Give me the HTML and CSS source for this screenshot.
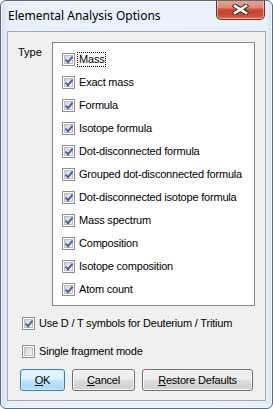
FILE: index.html
```html
<!DOCTYPE html>
<html lang="en">
<head>
    <meta charset="UTF-8">
    <meta name="viewport" content="width=device-width, initial-scale=1.0">
    <title>Elemental Analysis Options</title>
    <link rel="stylesheet" href="styles.css">
</head>
<body>
    <div class="window">
        <div class="titlebar">
            <span class="title">Elemental Analysis Options</span>
            <div class="close">
                <svg width="17" height="11" viewBox="0 0 17 11">
                    <path d="M3 2 L14 9 M14 2 L3 9" stroke="#4a2a26" stroke-width="4.6" stroke-linecap="square"/>
                    <path d="M3 2 L14 9 M14 2 L3 9" stroke="#ffffff" stroke-width="2.6" stroke-linecap="square"/>
                </svg>
            </div>
        </div>

        <div class="client">
            <div class="group">
                <div class="group-label">Type</div>
                <div class="listbox">
                    <label class="item"><span class="check on"></span><span class="text focus">Mass</span></label>
                    <label class="item"><span class="check on"></span><span class="text">Exact mass</span></label>
                    <label class="item"><span class="check on"></span><span class="text">Formula</span></label>
                    <label class="item"><span class="check on"></span><span class="text">Isotope formula</span></label>
                    <label class="item"><span class="check on"></span><span class="text">Dot-disconnected formula</span></label>
                    <label class="item"><span class="check on"></span><span class="text">Grouped dot-disconnected formula</span></label>
                    <label class="item"><span class="check on"></span><span class="text">Dot-disconnected isotope formula</span></label>
                    <label class="item"><span class="check on"></span><span class="text">Mass spectrum</span></label>
                    <label class="item"><span class="check on"></span><span class="text">Composition</span></label>
                    <label class="item"><span class="check on"></span><span class="text">Isotope composition</span></label>
                    <label class="item"><span class="check on"></span><span class="text">Atom count</span></label>
                </div>
            </div>

            <label class="option first"><span class="check on"></span><span class="text">Use D / T symbols for Deuterium / Tritium</span></label>
            <label class="option"><span class="check"></span><span class="text">Single fragment mode</span></label>

            <div class="buttons">
                <button class="btn default" style="width: 45px"><u>O</u>K</button>
                <button class="btn" style="width: 63px"><u>C</u>ancel</button>
                <button class="btn" style="width: 111px"><u>R</u>estore Defaults</button>
            </div>
        </div>
    </div>
</body>
</html>
```

FILE: styles.css
```css
body {
    margin: 0;
    background: #ffffff;
    font-family: "Liberation Sans", Arial, sans-serif;
    font-size: 11px;
    color: #000;
}
.window {
    width: 273px;
    height: 409px;
    box-sizing: border-box;
    border: 1px solid #5b6a7c;
    border-radius: 6px;
    background: linear-gradient(to right, #d5e2f1 0px, #e8f0fa 8px, #eaf2fb 50%, #e8f0fa 265px, #d5e2f1 100%);
    box-shadow: inset 0 0 0 1px #f4f8fd;
    display: flex;
    flex-direction: column;
    overflow: hidden;
}
.titlebar {
    height: 30px;
    display: flex;
    align-items: flex-start;
    padding-left: 7px;
}
.title {
    font-family: "Noto Sans", "Open Sans", sans-serif;
    font-size: 12px;
    line-height: 16px;
    margin-top: 7px;
    color: #000;
}
.close {
    margin-left: auto;
    margin-right: 7px;
    margin-top: -1px;
    width: 49px;
    height: 20px;
    box-sizing: border-box;
    border: 1px solid #7b2e22;
    border-top: none;
    border-radius: 0 0 5px 5px;
    background: linear-gradient(#e6a597 0%, #dc8a79 40%, #c7462e 52%, #c9482f 75%, #d9694f 100%);
    box-shadow: inset 0 0 0 1px rgba(255, 220, 210, 0.55);
    display: flex;
    justify-content: center;
    align-items: center;
}
.client {
    flex: 1;
    margin: 0 6px 7px 6px;
    border: 1px solid #9aa8b9;
    background: #f0f0f0;
    padding: 10px 10px 0 10px;
    display: flex;
    flex-direction: column;
}
.group {
    display: flex;
}
.group-label {
    width: 34px;
    margin-top: 4px;
    line-height: 13px;
}
.listbox {
    width: 201px;
    height: 257px;
    border: 1px solid #828790;
    background: #fff;
    padding-top: 5px;
}
.item {
    display: flex;
    align-items: center;
    height: 23px;
    padding-left: 9px;
}
.check {
    width: 11px;
    height: 11px;
    border: 1px solid #8e8f8f;
    background: #fff;
    position: relative;
    flex-shrink: 0;
    margin-right: 3px;
}
.check::before {
    content: "";
    position: absolute;
    left: 1px;
    top: 1px;
    width: 9px;
    height: 9px;
    background: linear-gradient(135deg, #c9ccd1 0%, #e4e5e8 50%, #f7f7f7 100%);
    box-shadow: inset 0 0 0 1px #bdbfc4;
}
.check.on::after {
    content: "";
    position: absolute;
    left: 1px;
    top: 1px;
    width: 10px;
    height: 10px;
    background: no-repeat center / 10px 10px url("data:image/svg+xml,%3Csvg xmlns='http://www.w3.org/2000/svg' width='10' height='10' viewBox='0 0 10 10'%3E%3Cpath d='M1.6 4.6 L4 7.2 L8.6 1.6' fill='none' stroke='%234a5f9a' stroke-width='1.9'/%3E%3C/svg%3E");
}
.text {
    line-height: 13px;
    padding: 0 1px;
    letter-spacing: -0.2px;
    white-space: nowrap;
}
.focus {
    outline: 1px dotted #000;
    outline-offset: 0;
}
.option {
    display: flex;
    align-items: center;
    height: 16px;
    margin-left: 4px;
    margin-top: 12px;
}
.option.first {
    margin-top: 9px;
}
.buttons {
    display: flex;
    gap: 7px;
    margin-top: 10px;
    margin-left: 2px;
}
.btn {
    height: 22px;
    box-sizing: border-box;
    font-family: "Liberation Sans", Arial, sans-serif;
    font-size: 11px;
    letter-spacing: -0.2px;
    color: #000;
    padding: 0;
    border: 1px solid #707070;
    border-radius: 3px;
    background: linear-gradient(#f2f2f2 0%, #ebebeb 50%, #dddddd 50%, #cfcfcf 100%);
    box-shadow: inset 0 0 0 1px #fbfbfb;
}
.btn.default {
    border-color: #3c7fb1;
    background: linear-gradient(#eaf6fd 0%, #d9f0fc 50%, #bee6fd 50%, #a7d9f5 100%);
    box-shadow: inset 0 0 0 1px #d0ecfb;
}
```
